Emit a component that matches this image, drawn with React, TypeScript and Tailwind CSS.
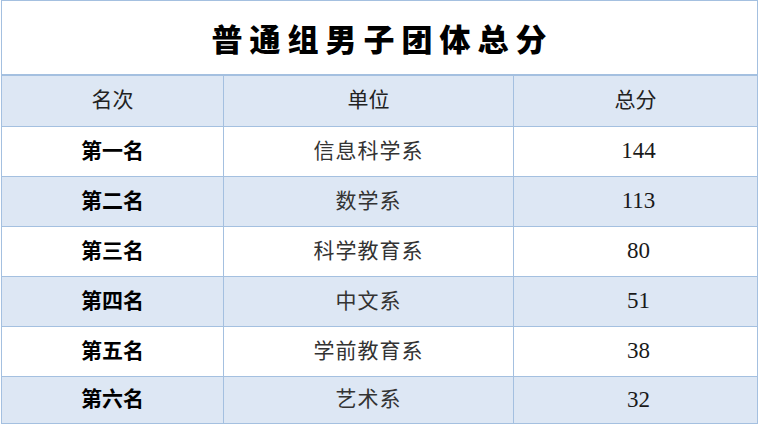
const rows = [
  { rank: "第一名", unit: "信息科学系", score: "144" },
  { rank: "第二名", unit: "数学系", score: "113" },
  { rank: "第三名", unit: "科学教育系", score: "80" },
  { rank: "第四名", unit: "中文系", score: "51" },
  { rank: "第五名", unit: "学前教育系", score: "38" },
  { rank: "第六名", unit: "艺术系", score: "32" },
];

const cjk = { fontFamily: '"Liberation Serif", "Noto Sans CJK SC", serif' };

export default function App() {
  return (
    <div className="w-[760px] h-[428px] bg-white overflow-hidden">
      <div className="w-[757px] ml-px border border-[#a4c0e0]" style={cjk}>
        {/* title */}
        <div className="h-[75px] flex items-center justify-center border-b-2 border-[#a4c0e0]">
          <span
            className="text-[31px] font-black tracking-[7px] text-black pl-[6px] pt-[2px]"
            style={{ fontFamily: '"Noto Sans CJK SC", sans-serif' }}
          >
            普通组男子团体总分
          </span>
        </div>

        {/* header */}
        <div className="grid grid-cols-[222px_290px_1fr] h-[51px] bg-[#dde7f4] border-b border-[#a4c0e0] text-[21px] text-[#222]">
          <div className="flex items-center justify-center border-r border-[#a4c0e0]">名次</div>
          <div className="flex items-center justify-center border-r border-[#a4c0e0]">单位</div>
          <div className="flex items-center justify-center">总分</div>
        </div>

        {rows.map((r, i) => (
          <div
            key={r.rank}
            className={
              "grid grid-cols-[222px_290px_1fr] text-[21px] " +
              (i % 2 === 1 ? "bg-[#dde7f4] " : "bg-white ") +
              (i < rows.length - 1 ? "h-[50px] border-b border-[#a4c0e0]" : "h-[46px]")
            }
          >
            <div className="flex items-center justify-center border-r border-[#a4c0e0] font-bold text-black">
              {r.rank}
            </div>
            <div className="flex items-center justify-center border-r border-[#a4c0e0] text-[#333] tracking-[1px]">
              {r.unit}
            </div>
            <div className="flex items-center justify-center text-[#1a1a1a] text-[23px] pl-[6px]">
              {r.score}
            </div>
          </div>
        ))}
      </div>
    </div>
  );
}
